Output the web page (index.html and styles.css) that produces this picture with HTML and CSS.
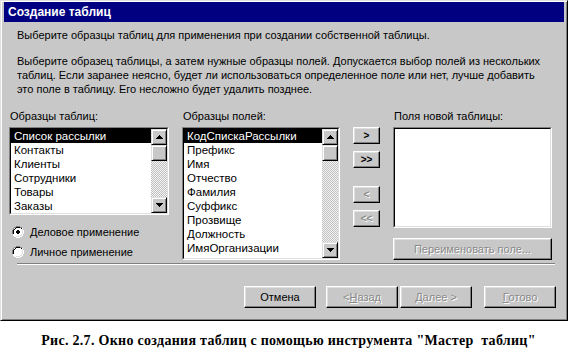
FILE: index.html
```html
<!DOCTYPE html>
<html lang="ru">
<head>
<meta charset="utf-8">
<title>Создание таблиц</title>
<link rel="stylesheet" href="styles.css">
</head>
<body>
<div class="dialog">
  <div class="titlebar">Создание таблиц</div>
  <div class="body">
    <p class="intro">Выберите образцы таблиц для применения при создании собственной таблицы.</p>
    <p class="para">Выберите образец таблицы, а затем нужные образцы полей. Допускается выбор полей из нескольких<br>таблиц. Если заранее неясно, будет ли использоваться определенное поле или нет, лучше добавить<br>это поле в таблицу. Его несложно будет удалить позднее.</p>
    <div class="columns">
      <div class="col col1">
        <div class="label">Образцы таблиц:</div>
        <div class="listbox lb1">
          <div class="inner">
            <ul class="items">
              <li class="sel">Список рассылки</li>
              <li>Контакты</li>
              <li>Клиенты</li>
              <li>Сотрудники</li>
              <li>Товары</li>
              <li>Заказы</li>
            </ul>
            <div class="scrollbar">
              <div class="sbtn"><svg width="7" height="4" viewBox="0 0 7 4"><path d="M3 0h1v1h1v1h1v1h1v1H0V3h1V2h1V1h1z" fill="#000"/></svg></div>
              <div class="sbtn thumb"></div>
              <div class="track"></div>
              <div class="sbtn"><svg width="7" height="4" viewBox="0 0 7 4"><path d="M0 0h7v1H6v1H5v1H4v1H3V3H2V2H1V1H0z" fill="#000"/></svg></div>
            </div>
          </div>
        </div>
        <div class="radios">
          <div class="radio"><svg width="12" height="12" viewBox="0 0 12 12"><path d="M4 0h4v1h2v1h1v2h1v4h-1v2h-1v1h-2v1H4v-1H2v-1H1V8H0V4h1V2h1V1h2z" fill="#fff"/><path d="M4 0h4v1h2v1h-2V1H4v1H2v2H1v4H0V4h1V2h1V1h2z" fill="#808080"/><path d="M4 1h4v1h2v1H9V2H8h0H4v1H3v1H2v4H1V4h1V3h1V2h1z" fill="#000"/><path d="M10 3h1v5h-1v2H8v1H4v-1h4V9h1V8h1z" fill="#dfdfdf"/><path d="M5 4h2v1h1v2H7v1H5V7H4V5h1z" fill="#000"/></svg><span>Деловое применение</span></div>
          <div class="radio"><svg width="12" height="12" viewBox="0 0 12 12"><path d="M4 0h4v1h2v1h1v2h1v4h-1v2h-1v1h-2v1H4v-1H2v-1H1V8H0V4h1V2h1V1h2z" fill="#fff"/><path d="M4 0h4v1h2v1h-2V1H4v1H2v2H1v4H0V4h1V2h1V1h2z" fill="#808080"/><path d="M4 1h4v1h2v1H9V2H8h0H4v1H3v1H2v4H1V4h1V3h1V2h1z" fill="#000"/><path d="M10 3h1v5h-1v2H8v1H4v-1h4V9h1V8h1z" fill="#dfdfdf"/></svg><span>Личное применение</span></div>
        </div>
      </div>
      <div class="col col2">
        <div class="label">Образцы полей:</div>
        <div class="listbox lb2">
          <div class="inner">
            <ul class="items">
              <li class="sel">КодСпискаРассылки</li>
              <li>Префикс</li>
              <li>Имя</li>
              <li>Отчество</li>
              <li>Фамилия</li>
              <li>Суффикс</li>
              <li>Прозвище</li>
              <li>Должность</li>
              <li>ИмяОрганизации</li>
              <li>Адрес</li>
            </ul>
            <div class="scrollbar">
              <div class="sbtn"><svg width="7" height="4" viewBox="0 0 7 4"><path d="M3 0h1v1h1v1h1v1h1v1H0V3h1V2h1V1h1z" fill="#000"/></svg></div>
              <div class="sbtn thumb"></div>
              <div class="track"></div>
              <div class="sbtn"><svg width="7" height="4" viewBox="0 0 7 4"><path d="M0 0h7v1H6v1H5v1H4v1H3V3H2V2H1V1H0z" fill="#000"/></svg></div>
            </div>
          </div>
        </div>
      </div>
      <div class="movebtns">
        <div class="btn mbtn">&gt;</div>
        <div class="btn mbtn">&gt;&gt;</div>
        <div class="btn mbtn disabled gap">&lt;</div>
        <div class="btn mbtn disabled">&lt;&lt;</div>
      </div>
      <div class="col col3">
        <div class="label">Поля новой таблицы:</div>
        <div class="listbox lb3"><div class="inner"></div></div>
        <div class="btn rename disabled">Переименовать поле...</div>
      </div>
    </div>
    <div class="separator"></div>
    <div class="footer">
      <div class="btn fbtn">Отмена</div>
      <div class="btn fbtn disabled back">&lt; <u>Н</u>азад</div>
      <div class="btn fbtn disabled next"><u>Д</u>алее &gt;</div>
      <div class="btn fbtn disabled done"><u>Г</u>отово</div>
    </div>
  </div>
</div>
<p class="caption">Рис. 2.7. Окно создания таблиц с помощью инструмента "Мастер&nbsp; таблиц"</p>
</body>
</html>
```

FILE: styles.css
```css
* { box-sizing: border-box; }
html, body { margin: 0; padding: 0; background: #fff; }
body { font-family: "Liberation Sans", Arial, sans-serif; font-size: 11px; color: #000; }

.dialog {
  width: 568px;
  background: #c8c8c8;
  border: 1px solid;
  border-color: #dfdfdf #000 #000 #dfdfdf;
  box-shadow: inset 1px 1px #fff, inset -1px -1px #808080;
  padding: 1px 3px 0 3px;
}

.titlebar {
  height: 20px;
  background: #000080;
  color: #fff;
  font-weight: bold;
  font-size: 12px;
  line-height: 20px;
  padding-left: 4px;
}

.body { padding: 6px 0 12px 5px; }

.intro, .para { margin: 0 0 0 8px; line-height: 14px; }
.intro { margin-bottom: 12px; }
.para { margin-bottom: 13px; }

.columns { display: flex; gap: 13px; align-items: flex-start; }
.col { display: flex; flex-direction: column; }
.col1 { width: 160px; }
.col2 { width: 158px; }
.col3 { width: 159px; }

.label { line-height: 14px; margin: 0 0 4px 1px; }

.listbox {
  border: 1px solid;
  border-color: #808080 #fff #fff #808080;
  background: #fff;
}
.listbox .inner {
  height: 100%;
  border: 1px solid;
  border-color: #000 #dfdfdf #dfdfdf #000;
  display: flex;
  overflow: hidden;
}
.lb1 { height: 88px; }
.lb2 { height: 133px; }
.lb3 { height: 101px; }

.items { list-style: none; margin: 0; padding: 0; flex: 1; }
.items li { height: 14px; line-height: 14px; padding-left: 3px; white-space: nowrap; font-size: 11.5px; }
.items li.sel { background: #000; color: #fff; }

.scrollbar { width: 16px; display: flex; flex-direction: column; }
.sbtn {
  height: 16px;
  flex: none;
  background: #c8c8c8;
  border: 1px solid;
  border-color: #dfdfdf #000 #000 #dfdfdf;
  box-shadow: inset 1px 1px #fff, inset -1px -1px #808080;
  display: flex; align-items: center; justify-content: center;
}
.track {
  flex: 1;
  background: repeating-conic-gradient(#c0c0c0 0 25%, #f4f4f4 0 50%) 0 0 / 2px 2px;
}

.radios { margin-top: 7px; }
.radio { height: 20px; display: flex; align-items: center; padding-left: 3px; }
.radio svg { margin-right: 6px; }

.btn {
  background: #c8c8c8;
  border: 1px solid;
  border-color: #fff #000 #000 #fff;
  box-shadow: inset -1px -1px #808080, inset 1px 1px #dfdfdf;
  display: flex; align-items: center; justify-content: center;
  white-space: nowrap;
}
.disabled { color: #8a8a8a; text-shadow: 1px 1px 0 #fff; }

.movebtns { width: 27px; display: flex; flex-direction: column; padding-top: 18px; gap: 7px; }
.mbtn { height: 17px; font-weight: bold; font-size: 10px; }
.mbtn.gap { margin-top: 11px; }

.rename { height: 22px; margin-top: 10px; }

.separator {
  height: 2px;
  margin: 1px 9px 0 8px;
  border-top: 1px solid #808080;
  border-bottom: 1px solid #fff;
}

.footer { display: flex; margin-top: 21px; padding-left: 235px; }
.fbtn { width: 72px; height: 22px; }
.back { margin-left: 10px; }
.next { margin-left: 2px; }
.done { margin-left: 12px; }
.fbtn u { text-decoration: underline; }

.caption {
  margin: 12px 0 0 0;
  text-align: center;
  font-family: "Liberation Serif", serif;
  font-weight: bold;
  font-size: 14px;
  letter-spacing: 0.3px;
  line-height: 16px;
  white-space: nowrap;
  padding-left: 6px;
}
```
